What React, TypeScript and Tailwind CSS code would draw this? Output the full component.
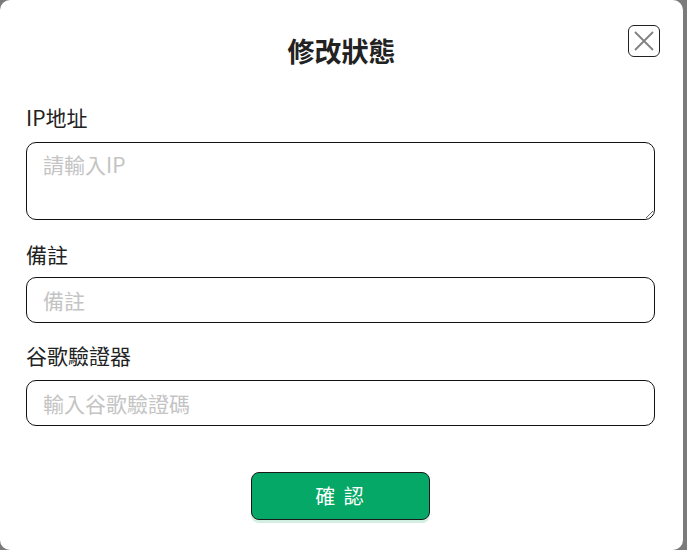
import { useState } from 'react'

const font = { fontFamily: '"Noto Sans CJK TC", "Noto Sans", sans-serif' }

export default function App() {
  const [ip, setIp] = useState('')
  const [note, setNote] = useState('')
  const [code, setCode] = useState('')

  return (
    <div className="h-[550px] w-[687px] bg-[#7b7b7b]" style={font}>
      <div className="h-[550px] w-[683px] rounded-[10px] bg-white px-[26px] pt-[33px] relative">
        {/* Close */}
        <button className="absolute left-[628px] top-[25px] flex h-[32px] w-[32px] items-center justify-center rounded-[6px] border border-[#222]">
          <svg width="22" height="22" viewBox="0 0 22 22" fill="none" stroke="#808080" strokeWidth="1.8">
            <path d="M2 2 L20 20 M20 2 L2 20" />
          </svg>
        </button>

        {/* Title */}
        <h2 className="text-center text-[27px] font-bold leading-[36px] text-[#222]">修改狀態</h2>

        {/* IP */}
        <label className="mt-[34px] block text-[21px] leading-[28px] text-[#222]">IP地址</label>
        <textarea
          value={ip}
          onChange={(e) => setIp(e.target.value)}
          placeholder="請輸入IP"
          className="mt-[11px] block h-[78px] w-[629px] rounded-[10px] border border-[#111] px-[16px] pt-[7px] text-[21px] leading-[28px] text-[#222] outline-none placeholder:text-[#c4c4c4]"
        />

        {/* Note */}
        <label className="mt-[20px] block text-[21px] leading-[28px] text-[#222]">備註</label>
        <input
          value={note}
          onChange={(e) => setNote(e.target.value)}
          placeholder="備註"
          className="mt-[9px] block h-[46px] w-[629px] rounded-[10px] border border-[#111] px-[16px] text-[21px] text-[#222] outline-none placeholder:text-[#c4c4c4]"
        />

        {/* Google auth */}
        <label className="mt-[18px] block text-[21px] leading-[28px] text-[#222]">谷歌驗證器</label>
        <input
          value={code}
          onChange={(e) => setCode(e.target.value)}
          placeholder="輸入谷歌驗證碼"
          className="mt-[11px] block h-[46px] w-[629px] rounded-[10px] border border-[#111] px-[16px] text-[21px] text-[#222] outline-none placeholder:text-[#c4c4c4]"
        />

        <div className="mt-[46px] flex justify-center pr-[2px]">
          <button className="h-[48px] w-[179px] rounded-[8px] border border-[#1a1a1a] bg-[#05a866] text-[20px] font-normal tracking-[2px] text-white shadow-[0_3px_0_#d3efe2]">
            確 認
          </button>
        </div>
      </div>
    </div>
  )
}
